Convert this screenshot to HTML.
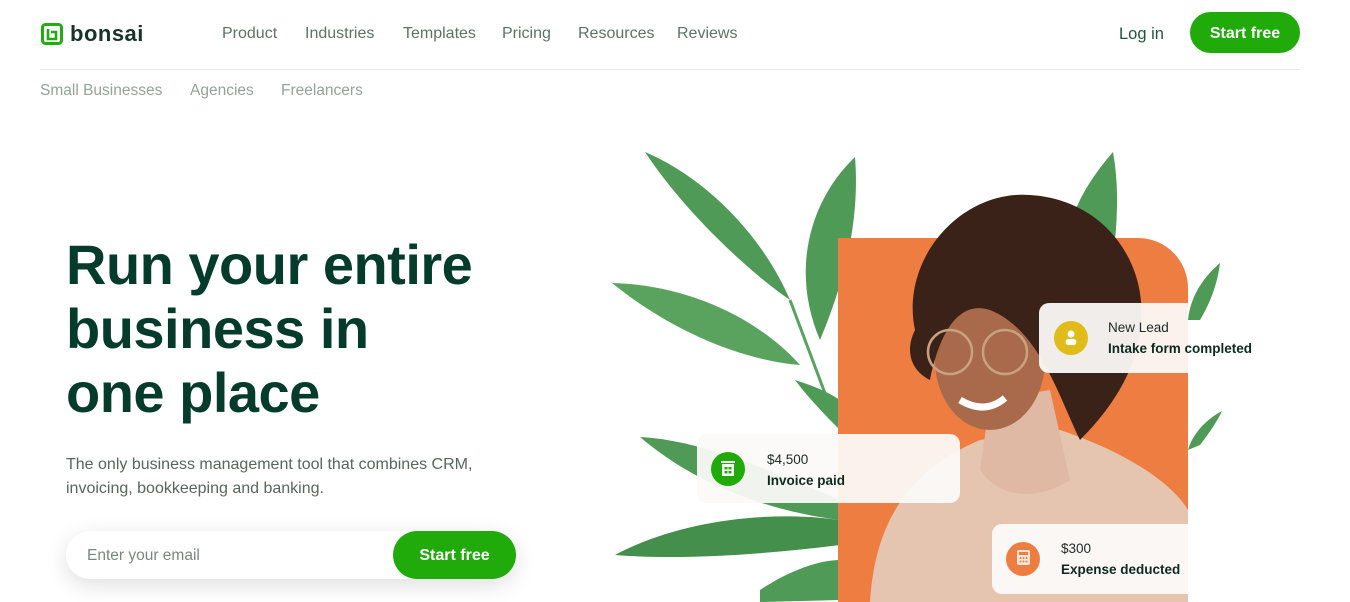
<!DOCTYPE html>
<html><head><meta charset="utf-8"><style>
*{margin:0;padding:0;box-sizing:border-box}
body{width:1350px;height:602px;overflow:hidden;background:#fff;font-family:"Liberation Sans",sans-serif;position:relative}
.a{position:absolute}
.nav a{position:absolute;top:25px;font-size:16px;color:#5b7467;text-decoration:none}
.sub{position:absolute;top:82px;font-size:15.5px;color:#94a39b}
h1{position:absolute;left:66px;top:233px;font-size:56px;line-height:64px;color:#053b2a;font-weight:bold;letter-spacing:-0.5px}
.bg{position:absolute;background:rgba(252,250,248,0.94);border-radius:10px}
.ic{position:absolute;width:34px;height:34px;border-radius:50%}
.t1{position:absolute;font-size:13.5px;color:#1c2b25}
.t2{position:absolute;font-size:13.5px;font-weight:bold;color:#0e2a20}
</style></head><body>
<svg class="a" style="left:41px;top:23px" width="22" height="22" viewBox="0 0 22 22"><rect x="1.5" y="1.5" width="19" height="19" rx="3" fill="none" stroke="#1fae12" stroke-width="3"/><path d="M7 6v10h8V9h-5" fill="none" stroke="#1fae12" stroke-width="2.6"/></svg>
<div class="a" style="left:70px;top:21px;font-size:22px;font-weight:bold;color:#183329;letter-spacing:0.5px">bonsai</div>
<div class="nav"><a style="left:222px">Product</a><a style="left:305px">Industries</a><a style="left:403px">Templates</a><a style="left:502px">Pricing</a><a style="left:578px">Resources</a><a style="left:677px">Reviews</a><a style="left:1119px;color:#1e5740;font-size:16.5px">Log in</a></div>
<div class="a" style="left:1190px;top:12px;width:110px;height:41px;border-radius:21px;background:#21ab0a;color:#fff;font-weight:bold;font-size:16px;text-align:center;line-height:43px">Start free</div>
<div class="a" style="left:40px;top:69px;width:1260px;height:1px;background:#e6e9e7"></div>
<div class="sub" style="left:40px">Small Businesses</div><div class="sub" style="left:190px">Agencies</div><div class="sub" style="left:281px">Freelancers</div>
<h1>Run your entire<br>business in<br>one place</h1>
<div class="a" style="left:66px;top:453px;font-size:16px;line-height:24px;color:#55675e">The only business management tool that combines CRM,<br>invoicing, bookkeeping and banking.</div>
<div class="a" style="left:66px;top:531px;width:450px;height:48px;border-radius:24px;background:#fff;box-shadow:0 6px 22px rgba(0,0,0,0.13)"></div>
<div class="a" style="left:87px;top:547px;font-size:15.5px;color:#7a8780">Enter your email</div>
<div class="a" style="left:393px;top:531px;width:123px;height:48px;border-radius:24px;background:#21ab0a;color:#fff;font-weight:bold;font-size:16px;text-align:center;line-height:50px">Start free</div>
<svg class="a" style="left:600px;top:140px" width="650" height="462" viewBox="600 140 650 462">
<g fill="#4f9a56">
<path d="M645 152C700 175 760 230 790 300C760 280 690 220 645 152Z"/>
<path d="M855 157C810 200 790 270 820 340C845 280 860 220 855 157Z"/>
<path d="M612 283C690 285 760 320 800 365C740 360 670 330 612 283Z" fill="#5aa35e"/>
<path d="M790 300L835 420" stroke="#5aa35e" stroke-width="3" fill="none"/>
<path d="M1113 152C1080 190 1060 230 1070 270L1115 240C1118 210 1118 180 1113 152Z"/>
<path d="M1220 263C1200 280 1190 300 1188 320L1200 320C1212 300 1218 280 1220 263Z"/>
<path d="M1222 411C1205 420 1192 435 1188 450L1200 445C1210 432 1218 420 1222 411Z"/>
<path d="M640 437C700 440 770 470 840 500L840 520C760 510 690 480 640 437Z"/>
<path d="M615 555C680 520 770 510 840 520L840 545C760 555 680 560 615 555Z" fill="#458f4c"/>
<path d="M760 590C790 570 820 560 840 560L840 600L760 602Z"/>
<path d="M795 380C810 400 830 420 840 430L840 400C825 390 810 385 795 380Z"/>
</g>
<path d="M838 238H1138A50 50 0 0 1 1188 288V602H838Z" fill="#ee7d41"/>
<path d="M870 602C875 520 910 470 980 440L1060 430C1120 450 1170 480 1188 510V602Z" fill="#e5c4b0"/>
<path d="M990 400L1050 390L1070 480C1040 500 1000 500 980 470Z" fill="#dfb9a3"/>
<ellipse cx="990" cy="360" rx="55" ry="70" fill="#a86a4a"/>
<path d="M915 330C900 260 960 190 1030 195C1110 200 1150 270 1140 330C1135 380 1100 420 1080 440C1060 400 1040 330 990 310C960 300 940 330 930 380C910 370 905 350 915 330Z" fill="#3b2218"/>
<circle cx="950" cy="352" r="22" fill="none" stroke="#c9a080" stroke-width="2.5"/><circle cx="1005" cy="352" r="22" fill="none" stroke="#c9a080" stroke-width="2.5"/>
<path d="M960 400Q985 415 1005 398" stroke="#fff" stroke-width="7" fill="none"/>
</svg>
<div class="bg" style="left:1039px;top:303px;width:149px;height:70px;border-radius:10px 0 0 10px"></div>
<div class="ic" style="left:1054px;top:321px;background:#dfbc1a"></div>
<div class="t1" style="left:1108px;top:320px">New Lead</div><div class="t2" style="left:1108px;top:341px">Intake form completed</div>
<svg class="a" style="left:1065px;top:330px" width="12" height="16" viewBox="0 0 12 16"><circle cx="6" cy="4" r="3.5" fill="#fff"/><rect x="0.5" y="9" width="11" height="6" rx="3" fill="#fff"/></svg>
<div class="bg" style="left:697px;top:434px;width:263px;height:69px"></div>
<div class="ic" style="left:711px;top:452px;background:#21ab0a"></div>
<div class="t1" style="left:767px;top:452px">$4,500</div><div class="t2" style="left:767px;top:473px">Invoice paid</div>
<svg class="a" style="left:721px;top:461px" width="14" height="15" viewBox="0 0 14 15"><rect x="0" y="0" width="14" height="2" fill="#fff"/><rect x="1" y="3" width="12" height="12" fill="#fff"/><g fill="#21ab0a"><rect x="3.5" y="6" width="3" height="2.5"/><rect x="7.5" y="6" width="3" height="2.5"/><rect x="3.5" y="10" width="3" height="2.5"/><rect x="7.5" y="10" width="3" height="2.5"/></g></svg>
<div class="bg" style="left:992px;top:524px;width:196px;height:70px;border-radius:10px 0 0 10px"></div>
<div class="ic" style="left:1006px;top:542px;background:#ee7d41"></div>
<div class="t1" style="left:1061px;top:541px">$300</div><div class="t2" style="left:1061px;top:562px">Expense deducted</div>
<svg class="a" style="left:1017px;top:550px" width="13" height="15" viewBox="0 0 13 15"><rect width="13" height="15" rx="2" fill="#fbe6d8"/><rect x="2" y="2" width="9" height="3" fill="#ee7d41"/><g fill="#ee7d41"><circle cx="3.5" cy="8" r="1"/><circle cx="6.5" cy="8" r="1"/><circle cx="9.5" cy="8" r="1"/><circle cx="3.5" cy="11.5" r="1"/><circle cx="6.5" cy="11.5" r="1"/><circle cx="9.5" cy="11.5" r="1"/></g></svg>
</body></html>
